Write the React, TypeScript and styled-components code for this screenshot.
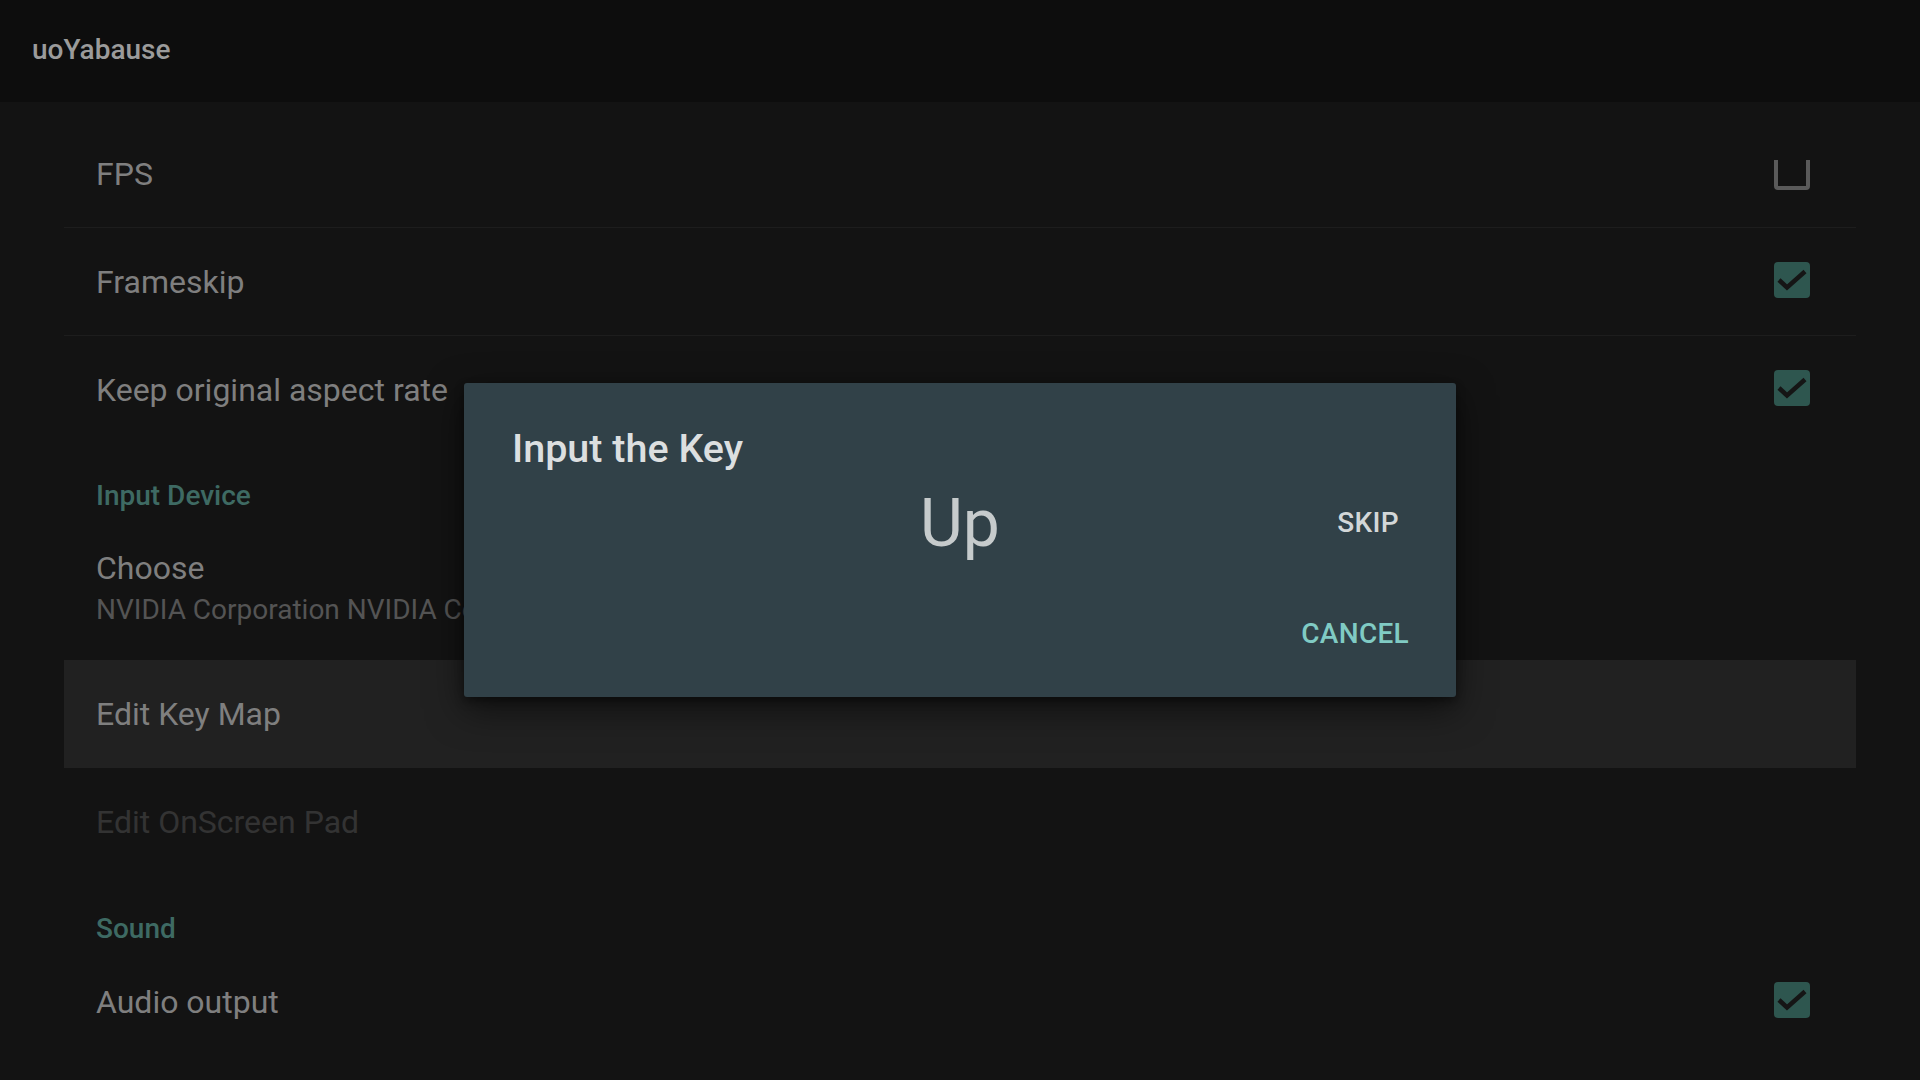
import React from 'react';
import styled, { createGlobalStyle } from 'styled-components';

const GlobalStyle = createGlobalStyle`
  html, body {
    margin: 0;
    padding: 0;
    background: #131313;
    font-family: Roboto, "Noto Sans", "Liberation Sans", sans-serif;
  }
`;

const Screen = styled.div`
  position: relative;
  width: 1920px;
  height: 1080px;
  overflow: hidden;
  background: #131313;
`;

const TopBar = styled.div`
  height: 102px;
  box-sizing: border-box;
  padding: 0 0 4px 32px;
  display: flex;
  align-items: center;
  background: #0d0d0d;
`;

const AppTitle = styled.div`
  font-size: 28px;
  font-weight: 500;
  color: #9b9b9b;
`;

const List = styled.div`
  margin: 0 64px;
  padding-top: 18px;
`;

const Row = styled.div<{ $divider?: boolean; $focused?: boolean; $tall?: boolean }>`
  box-sizing: border-box;
  height: ${(p) => (p.$tall ? '144px' : '108px')};
  padding: 0 46px 0 32px;
  display: flex;
  align-items: ${(p) => (p.$tall ? 'flex-start' : 'center')};
  justify-content: space-between;
  background: ${(p) => (p.$focused ? '#212121' : 'transparent')};
  border-bottom: 1px solid ${(p) => (p.$divider ? '#1d1d1d' : 'transparent')};
`;

const TextBlock = styled.div`
  display: flex;
  flex-direction: column;
  padding-top: 34px;
  min-width: 0;
  white-space: nowrap;
`;

const ItemTitle = styled.div<{ $disabled?: boolean }>`
  font-size: 32px;
  line-height: 36px;
  color: ${(p) => (p.$disabled ? '#333333' : '#7f7f7f')};
`;

const ItemSummary = styled.div`
  margin-top: 6px;
  font-size: 28px;
  line-height: 36px;
  color: #545454;
`;

const Category = styled.div<{ $offset?: number }>`
  padding: ${(p) => 34 + (p.$offset ?? 0)}px 32px ${(p) => 4 - (p.$offset ?? 0)}px;
  font-size: 28px;
  font-weight: 500;
  line-height: 34px;
  color: #3e6a63;
`;

const BoxIcon = styled.svg`
  width: 36px;
  height: 36px;
  margin-bottom: 4px;
  flex-shrink: 0;
`;

const CheckBox = ({ checked }: { checked: boolean }) =>
  checked ? (
    <BoxIcon viewBox="0 0 36 36">
      <rect x="0" y="0" width="36" height="36" rx="4" fill="#2e564f" />
      <polyline points="5,18 13,25.5 31,9.5" fill="none" stroke="#151515" strokeWidth="4.5" />
    </BoxIcon>
  ) : (
    <BoxIcon viewBox="0 0 36 36">
      <path
        d="M2 6 V32 Q2 34 4 34 H32 Q34 34 34 32 V6"
        fill="none"
        stroke="#5a5a5a"
        strokeWidth="4"
      />
    </BoxIcon>
  );

const Overlay = styled.div`
  position: absolute;
  inset: 0;
  display: flex;
  align-items: center;
  justify-content: center;
`;

const Dialog = styled.div`
  width: 992px;
  height: 314px;
  box-sizing: border-box;
  padding-top: 42px;
  display: flex;
  flex-direction: column;
  background: #314148;
  border-radius: 3px;
  box-shadow: 0 12px 36px rgba(0, 0, 0, 0.55), 0 4px 10px rgba(0, 0, 0, 0.4);
`;

const DialogTitle = styled.div`
  padding: 0 48px;
  font-size: 39.5px;
  font-weight: 500;
  line-height: 48px;
  color: #dcdfe0;
`;

const KeyBody = styled.div`
  margin-top: 11px;
  height: 80px;
  padding: 0 57px;
  display: grid;
  grid-template-columns: 1fr auto 1fr;
  align-items: center;
`;

const KeyName = styled.div`
  grid-column: 2;
  font-size: 66px;
  line-height: 80px;
  color: #c6cbcc;
`;

const TextButton = styled.div<{ $accent?: boolean }>`
  font-size: 28px;
  font-weight: 500;
  line-height: 36px;
  letter-spacing: 0.3px;
  color: ${(p) => (p.$accent ? '#80cbc4' : '#d3d7d8')};
`;

const SkipButton = styled(TextButton)`
  grid-column: 3;
  justify-self: end;
  margin-bottom: 2px;
`;

const ButtonBar = styled.div`
  margin-top: 34px;
  height: 72px;
  padding: 0 47px 0 0;
  display: flex;
  align-items: center;
  justify-content: flex-end;
`;

const App = () => {
  return (
    <Screen>
      <GlobalStyle />
      <TopBar>
        <AppTitle>uoYabause</AppTitle>
      </TopBar>
      <List>
        <Row $divider>
          <ItemTitle>FPS</ItemTitle>
          <CheckBox checked={false} />
        </Row>
        <Row $divider>
          <ItemTitle>Frameskip</ItemTitle>
          <CheckBox checked />
        </Row>
        <Row>
          <ItemTitle>Keep original aspect rate</ItemTitle>
          <CheckBox checked />
        </Row>
        <Category $offset={1}>Input Device</Category>
        <Row $tall>
          <TextBlock>
            <ItemTitle>Choose</ItemTitle>
            <ItemSummary>NVIDIA Corporation NVIDIA Controller v01.03</ItemSummary>
          </TextBlock>
        </Row>
        <Row $focused>
          <ItemTitle>Edit Key Map</ItemTitle>
        </Row>
        <Row>
          <ItemTitle $disabled>Edit OnScreen Pad</ItemTitle>
        </Row>
        <Category $offset={2}>Sound</Category>
        <Row>
          <ItemTitle>Audio output</ItemTitle>
          <CheckBox checked />
        </Row>
      </List>
      <Overlay>
        <Dialog>
          <DialogTitle>Input the Key</DialogTitle>
          <KeyBody>
            <KeyName>Up</KeyName>
            <SkipButton>SKIP</SkipButton>
          </KeyBody>
          <ButtonBar>
            <TextButton $accent>CANCEL</TextButton>
          </ButtonBar>
        </Dialog>
      </Overlay>
    </Screen>
  );
};

export default App;
